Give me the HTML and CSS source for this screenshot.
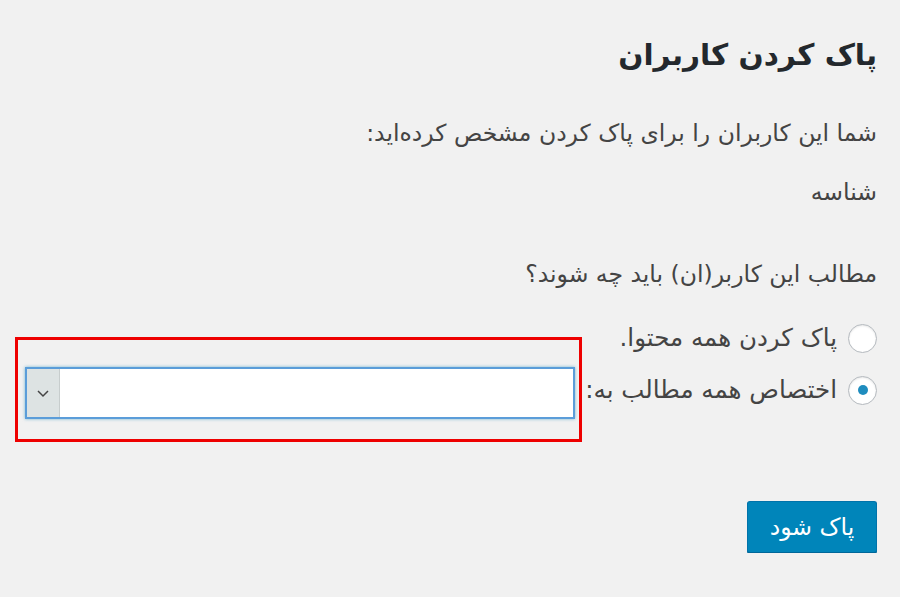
FILE: index.html
```html
<!DOCTYPE html>
<html lang="fa" dir="rtl">
<head>
<meta charset="utf-8">
<link rel="stylesheet" href="styles.css">
</head>
<body>
<div class="wrap">
  <h1 class="title">پاک کردن کاربران</h1>
  <p class="line line-intro">شما این کاربران را برای پاک کردن مشخص کرده‌اید:</p>
  <p class="line line-id">شناسه</p>
  <p class="line line-q">مطالب این کاربر(ان) باید چه شوند؟</p>
  <div class="options">
    <label class="opt">
      <span class="radio"></span>
      <span class="opt-text">پاک کردن همه محتوا.</span>
    </label>
    <label class="opt opt-assign">
      <span class="radio checked"></span>
      <span class="opt-text">اختصاص همه مطالب به:</span>
      <span class="select-wrap">
        <span class="select">
          <span class="select-field"></span>
          <span class="select-arrow">
            <svg width="14" height="9" viewBox="0 0 14 9"><path d="M2 2 L7 7 L12 2" fill="none" stroke="#444" stroke-width="1.5"/></svg>
          </span>
        </span>
      </span>
    </label>
  </div>
  <div class="actions">
    <button class="btn">پاک شود</button>
  </div>
</div>
</body>
</html>
```
FILE: styles.css
```css
html, body {
  margin: 0;
  padding: 0;
  background: #f1f1f1;
}
body {
  font-family: "DejaVu Sans", "Noto Sans", sans-serif;
  color: #444;
  direction: rtl;
}
.wrap {
  padding: 0 23px 0 0;
}
.title {
  margin: 0;
  padding-top: 35px;
  font-size: 29.5px;
  line-height: 40px;
  font-weight: bold;
  color: #23282d;
}
.line {
  margin: 0;
  font-size: 23.5px;
  line-height: 30px;
}
.line-intro { margin-top: 43px; }
.line-id { margin-top: 29px; }
.line-q { margin-top: 52px; }
.options {
  margin-top: 34px;
  display: flex;
  flex-direction: column;
  gap: 22px;
}
.opt {
  display: flex;
  align-items: center;
  font-size: 24.5px;
  line-height: 30px;
  height: 30px;
}
.radio {
  flex: none;
  width: 27px;
  height: 27px;
  border: 1px solid #b4b9be;
  border-radius: 50%;
  background: #fff;
  box-shadow: inset 0 1px 2px rgba(0,0,0,0.1);
  margin-left: 11px;
  display: flex;
  align-items: center;
  justify-content: center;
}
.radio.checked::before {
  content: "";
  width: 10px;
  height: 10px;
  border-radius: 50%;
  background: #1e8cbe;
}
.select-wrap {
  position: relative;
  margin-right: 10px;
  margin-top: 6px;
  display: flex;
}
.select-wrap::after {
  content: "";
  position: absolute;
  top: -30px;
  bottom: -23px;
  right: -7px;
  left: -10px;
  border: 3px solid #ee0000;
  pointer-events: none;
}
.select {
  display: flex;
  width: 550px;
  height: 52px;
  box-sizing: border-box;
  border: 2px solid #5b9dd9;
  box-shadow: 0 0 3px rgba(30,140,190,0.6);
  background: #fff;
}
.select-field {
  flex: 1;
  background: #fff;
}
.select-arrow {
  flex: none;
  width: 32px;
  background: #dde3e3;
  border-right: 1px solid #c7cdcd;
  display: flex;
  align-items: center;
  justify-content: center;
}
.actions {
  margin-top: 96px;
}
.btn {
  font-family: "DejaVu Sans", "Noto Sans", sans-serif;
  font-size: 23.5px;
  width: 130px;
  height: 52px;
  background: #0085ba;
  color: #fff;
  border: 1px solid #0073aa;
  border-bottom-color: #006799;
  border-radius: 3px;
  box-shadow: 0 1px 0 #006799;
  padding: 0;
}
```
